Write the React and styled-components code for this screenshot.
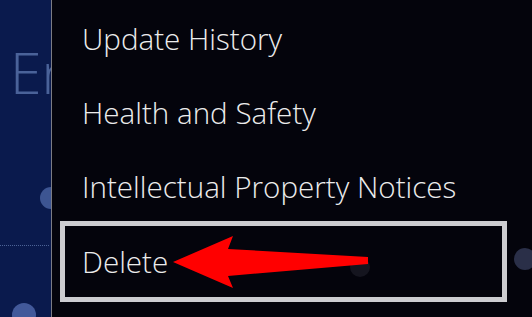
import React from 'react';
import styled, { createGlobalStyle } from 'styled-components';

const GlobalStyle = createGlobalStyle`
  html, body {
    margin: 0;
    padding: 0;
    background: #04040c;
  }
`;

const Screen = styled.div`
  position: relative;
  display: flex;
  width: 532px;
  height: 317px;
  overflow: hidden;
  font-family: 'Open Sans', 'Noto Sans', sans-serif;
  background: #04040c;
`;

const Sidebar = styled.div`
  position: relative;
  flex: 0 0 51px;
  display: flex;
  flex-direction: column;
  overflow: hidden;
  background: #0a1a4d;
  border-right: 1px solid #7c7c84;
`;

const SideTitle = styled.div`
  margin-top: 44px;
  padding-left: 10px;
  height: 57px;
  overflow: hidden;
  font-size: 57px;
  line-height: 57px;
  font-weight: 300;
  color: #4a6299;
  white-space: nowrap;
`;

const DottedRule = styled.div`
  margin: 144px 2px 0 0;
  border-top: 1px dotted #4c6396;
`;

// background bubbles of the console theme
const Dot = styled.div`
  position: absolute;
  left: ${props => props.x - props.r}px;
  top: ${props => props.y - props.r}px;
  width: ${props => props.r * 2}px;
  height: ${props => props.r * 2}px;
  border-radius: 50%;
  background: ${props => props.color || '#3d5592'};
`;

const Panel = styled.div`
  position: relative;
  flex: 1;
  padding-top: 2px;
`;

const MenuList = styled.ul`
  position: relative;
  list-style: none;
  margin: 0;
  padding: 0;
  display: flex;
  flex-direction: column;
`;

const MenuItem = styled.li`
  height: 74px;
  padding-left: 30px;
  font-size: 29.6px;
  line-height: 74px;
  font-weight: 300;
  color: #ececec;
  white-space: nowrap;
`;

const SelectedItem = styled(MenuItem)`
  box-sizing: border-box;
  height: 81px;
  width: 447px;
  margin: -3px 0 0 8px;
  padding-left: 17px;
  line-height: 71px;
  border: 5px solid #cdcdd1;
`;

const Arrow = styled.svg`
  position: absolute;
  inset: 0;
  pointer-events: none;
`;

const App = () => {
  const items = ['Update History', 'Health and Safety', 'Intellectual Property Notices'];

  return (
    <>
      <GlobalStyle />
      <Screen>
        <Sidebar>
          <SideTitle>En</SideTitle>
          <DottedRule />
          <Dot x={51} y={198} r={11} />
          <Dot x={24} y={315} r={12} color="#42599a" />
        </Sidebar>

        <Panel>
          <Dot x={473} y={259} r={11} color="#2a2f48" />
          <Dot x={308} y={267} r={10} color="#15151f" />
          <MenuList>
            {items.map(item => (
              <MenuItem key={item}>{item}</MenuItem>
            ))}
            <SelectedItem>Delete</SelectedItem>
          </MenuList>
        </Panel>

        {/* red annotation arrow */}
        <Arrow width="532" height="317" viewBox="0 0 532 317">
          <polygon
            points="173,262 233,236 228,249 368,257 368,264 228,276 233,288"
            fill="#ff0000"
          />
        </Arrow>
      </Screen>
    </>
  );
};

export default App;
